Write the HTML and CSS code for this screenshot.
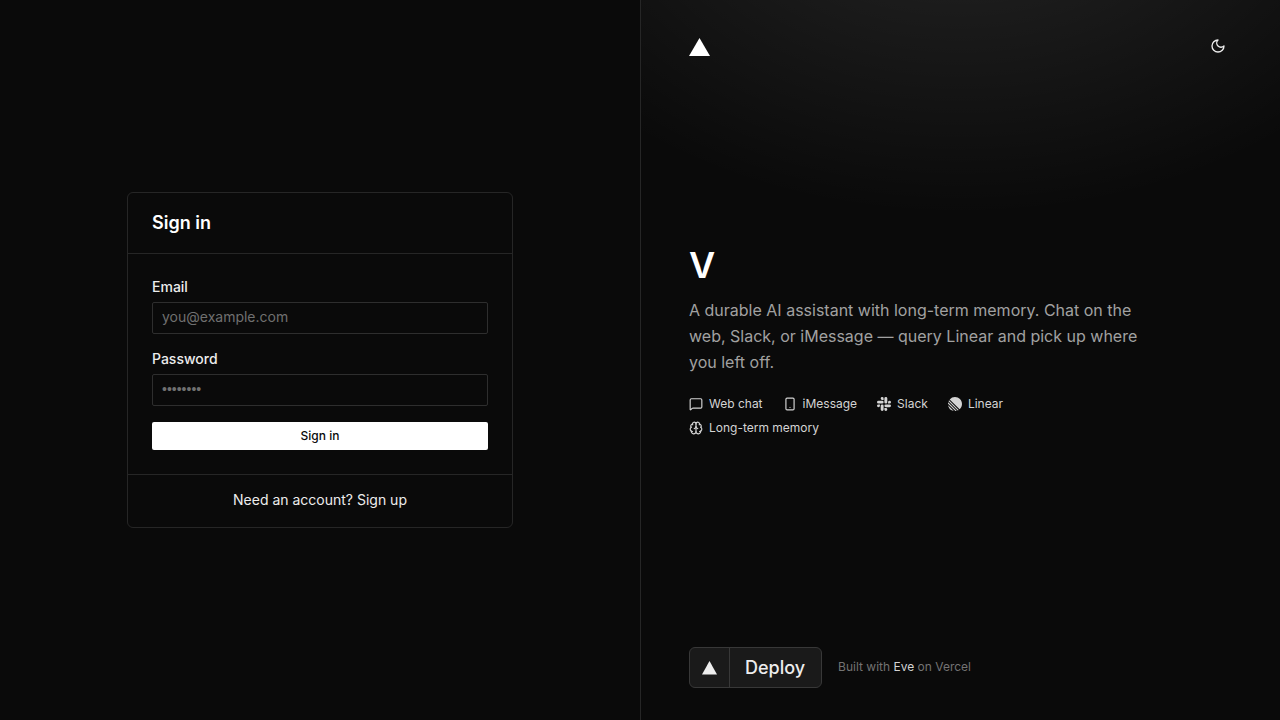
FILE: index.html
```html
<!DOCTYPE html>
<html lang="en">
<head>
    <meta charset="UTF-8">
    <meta name="viewport" content="width=device-width, initial-scale=1.0">
    <title>Sign in</title>
    <link rel="stylesheet" href="styles.css">
</head>
<body>
    <main class="auth-panel">
        <div class="card">
            <div class="card-header">
                <h2>Sign in</h2>
            </div>
            <form id="loginForm" class="card-body">
                <div class="field">
                    <label for="email">Email</label>
                    <input type="email" id="email" name="email" placeholder="you@example.com" required>
                </div>
                <div class="field">
                    <label for="password">Password</label>
                    <input type="password" id="password" name="password" placeholder="••••••••" required>
                </div>
                <button type="submit" class="submit-btn">Sign in</button>
            </form>
            <div class="card-footer">
                <a href="#signup">Need an account? Sign up</a>
            </div>
        </div>
    </main>

    <aside class="info-panel">
        <header class="info-header">
            <a href="#home" class="logo" aria-label="Vercel">
                <svg width="21" height="20" viewBox="0 0 21 20"><path d="M10.5 2L21 20H0z"/></svg>
            </a>
            <button type="button" class="theme-btn" aria-label="Toggle theme">
                <svg class="line-icon" viewBox="0 0 24 24"><path d="M12 3a6 6 0 0 0 9 9 9 9 0 1 1-9-9Z"/></svg>
            </button>
        </header>

        <section class="intro">
            <h1>V</h1>
            <p>A durable AI assistant with long-term memory. Chat on the web, Slack, or iMessage — query Linear and pick up where you left off.</p>
            <ul class="features">
                <li>
                    <svg class="line-icon" viewBox="0 0 24 24"><path d="M22 17a2 2 0 0 1-2 2H6.828a2 2 0 0 0-1.414.586l-2.202 2.202A.71.71 0 0 1 2 21.286V5a2 2 0 0 1 2-2h16a2 2 0 0 1 2 2z"/></svg>
                    Web chat
                </li>
                <li>
                    <svg class="line-icon" viewBox="0 0 24 24"><rect width="14" height="20" x="5" y="2" rx="2" ry="2"/><path d="M12 18h.01"/></svg>
                    iMessage
                </li>
                <li>
                    <svg class="fill-icon" viewBox="0 0 24 24"><path d="M5.042 15.165a2.528 2.528 0 0 1-2.52 2.523A2.528 2.528 0 0 1 0 15.165a2.527 2.527 0 0 1 2.522-2.52h2.52v2.52zM6.313 15.165a2.527 2.527 0 0 1 2.521-2.52 2.527 2.527 0 0 1 2.521 2.52v6.313A2.528 2.528 0 0 1 8.834 24a2.528 2.528 0 0 1-2.521-2.522v-6.313zM8.834 5.042a2.528 2.528 0 0 1-2.521-2.52A2.528 2.528 0 0 1 8.834 0a2.528 2.528 0 0 1 2.521 2.522v2.52H8.834zM8.834 6.313a2.528 2.528 0 0 1 2.521 2.521 2.528 2.528 0 0 1-2.521 2.521H2.522A2.528 2.528 0 0 1 0 8.834a2.528 2.528 0 0 1 2.522-2.521h6.312zM18.956 8.834a2.528 2.528 0 0 1 2.522-2.521A2.528 2.528 0 0 1 24 8.834a2.528 2.528 0 0 1-2.522 2.521h-2.522V8.834zM17.688 8.834a2.528 2.528 0 0 1-2.523 2.521 2.527 2.527 0 0 1-2.52-2.521V2.522A2.527 2.527 0 0 1 15.165 0a2.528 2.528 0 0 1 2.523 2.522v6.312zM15.165 18.956a2.528 2.528 0 0 1 2.523 2.522A2.528 2.528 0 0 1 15.165 24a2.527 2.527 0 0 1-2.52-2.522v-2.522h2.52zM15.165 17.688a2.527 2.527 0 0 1-2.52-2.523 2.526 2.526 0 0 1 2.52-2.52h6.313A2.527 2.527 0 0 1 24 15.165a2.528 2.528 0 0 1-2.522 2.523h-6.313z"/></svg>
                    Slack
                </li>
                <li>
                    <svg class="fill-icon" viewBox="0 0 24 24"><path d="M2.886 4.18A11.982 11.982 0 0 1 11.99 0C18.624 0 24 5.376 24 12.009c0 3.64-1.62 6.903-4.18 9.105L2.887 4.18ZM1.817 5.626l16.556 16.556c-.524.33-1.075.62-1.65.866L.951 7.277c.247-.575.537-1.126.866-1.65ZM.322 9.163l14.515 14.515c-.71.172-1.443.282-2.195.322L0 11.358a12 12 0 0 1 .322-2.195Zm-.17 4.862 9.823 9.824a12.02 12.02 0 0 1-9.824-9.824Z"/></svg>
                    Linear
                </li>
                <li>
                    <svg class="line-icon" viewBox="0 0 24 24"><path d="M12 18V5"/><path d="M15 13a4.17 4.17 0 0 1-3-4 4.17 4.17 0 0 1-3 4"/><path d="M17.598 6.5A3 3 0 1 0 12 5a3 3 0 1 0-5.598 1.5"/><path d="M17.997 5.125a4 4 0 0 1 2.526 5.77"/><path d="M18 18a4 4 0 0 0 2-7.464"/><path d="M19.967 17.483A4 4 0 1 1 12 18a4 4 0 1 1-7.967-.517"/><path d="M6 18a4 4 0 0 1-2-7.464"/><path d="M6.003 5.125a4 4 0 0 0-2.526 5.77"/></svg>
                    Long-term memory
                </li>
            </ul>
        </section>

        <footer class="info-footer">
            <a href="#deploy" class="deploy">
                <span class="deploy-icon">
                    <svg width="15" height="14" viewBox="0 0 15 14"><path d="M7.5 0L15 13.5H0z"/></svg>
                </span>
                <span class="deploy-text">Deploy</span>
            </a>
            <span class="credit">Built with <a href="#eve">Eve</a> on Vercel</span>
        </footer>
    </aside>
</body>
</html>
```
FILE: styles.css
```css
* {
    box-sizing: border-box;
}

body {
    margin: 0;
    min-height: 100vh;
    display: grid;
    grid-template-columns: 1fr 1fr;
    background: #0a0a0a;
    color: #ededed;
    font-family: Inter, "Liberation Sans", sans-serif;
    font-size: 14px;
    line-height: 20px;
}

h1, h2, p, ul {
    margin: 0;
    padding: 0;
}

a {
    color: inherit;
    text-decoration: none;
}

svg {
    display: block;
    flex-shrink: 0;
    fill: currentColor;
}

button {
    font-family: inherit;
    border: none;
    cursor: pointer;
}

/* Sign in card */
.auth-panel {
    display: flex;
    justify-content: center;
    align-items: center;
    padding: 24px;
}

.card {
    width: 100%;
    max-width: 386px;
    border: 1px solid #262626;
    border-radius: 6px;
}

.card-header {
    padding: 16px 24px;
    border-bottom: 1px solid #262626;
}

h2 {
    font-size: 18px;
    line-height: 28px;
    font-weight: 600;
    color: #fff;
}

.card-body {
    display: flex;
    flex-direction: column;
    gap: 16px;
    padding: 24px;
}

.field {
    display: flex;
    flex-direction: column;
    gap: 6px;
}

label {
    line-height: 18px;
    font-weight: 500;
}

input {
    width: 100%;
    height: 32px;
    padding: 0 9px 3px;
    border: 1px solid #2e2e2e;
    border-radius: 2px;
    background: transparent;
    color: #ededed;
    font-family: inherit;
    font-size: 14px;
}

input[type="password"] {
    font-family: "Liberation Sans", sans-serif;
}

input::placeholder {
    color: #707070;
}

.submit-btn {
    height: 28px;
    padding: 0 12px 2px;
    border-radius: 2px;
    background: #fff;
    color: #0a0a0a;
    font-size: 12px;
    font-weight: 500;
}

.card-footer {
    padding: 15px 24px 17px;
    border-top: 1px solid #262626;
    text-align: center;
}

/* Right side */
.info-panel {
    display: flex;
    flex-direction: column;
    padding: 32px 48px;
    border-left: 1px solid #262626;
    background: radial-gradient(ellipse 80% 50% at 50% -20%, rgba(255, 255, 255, 0.12), transparent);
}

.info-header {
    display: flex;
    justify-content: space-between;
    align-items: center;
}

.logo {
    color: #fff;
}

.theme-btn {
    display: grid;
    place-items: center;
    width: 28px;
    height: 28px;
    padding: 0;
    background: transparent;
    color: #ededed;
}

.intro {
    flex: 1;
    display: flex;
    flex-direction: column;
    justify-content: center;
    max-width: 456px;
    padding-bottom: 26px;
}

h1 {
    font-size: 36px;
    line-height: 40px;
    font-weight: 600;
    color: #fff;
}

.intro p {
    margin: 12px 0 21px;
    font-size: 16px;
    line-height: 26px;
    color: #a1a1a1;
}

.features {
    display: flex;
    flex-wrap: wrap;
    gap: 8px 20px;
    list-style: none;
}

.features li {
    display: flex;
    align-items: center;
    gap: 6px;
    font-size: 12px;
    line-height: 16px;
    color: #d4d4d4;
}

.line-icon,
.fill-icon {
    width: 14px;
    height: 14px;
}

.line-icon {
    fill: none;
    stroke: currentColor;
    stroke-width: 2;
    stroke-linecap: round;
    stroke-linejoin: round;
}

.theme-btn .line-icon {
    width: 16px;
    height: 16px;
}

.info-footer {
    display: flex;
    align-items: center;
    gap: 16px;
}

.deploy {
    display: flex;
    height: 41px;
    border: 1px solid #383838;
    border-radius: 6px;
    background: #1a1a1a;
    color: #ededed;
}

.deploy-icon {
    display: grid;
    place-items: center;
    width: 40px;
    border-right: 1px solid #383838;
}

.deploy-text {
    padding: 0 16px 0 15px;
    font-size: 18px;
    line-height: 39px;
    font-weight: 500;
}

.credit {
    padding-bottom: 2px;
    font-size: 12px;
    line-height: 16px;
    color: #737373;
}

.credit a {
    color: #d4d4d4;
}
```
